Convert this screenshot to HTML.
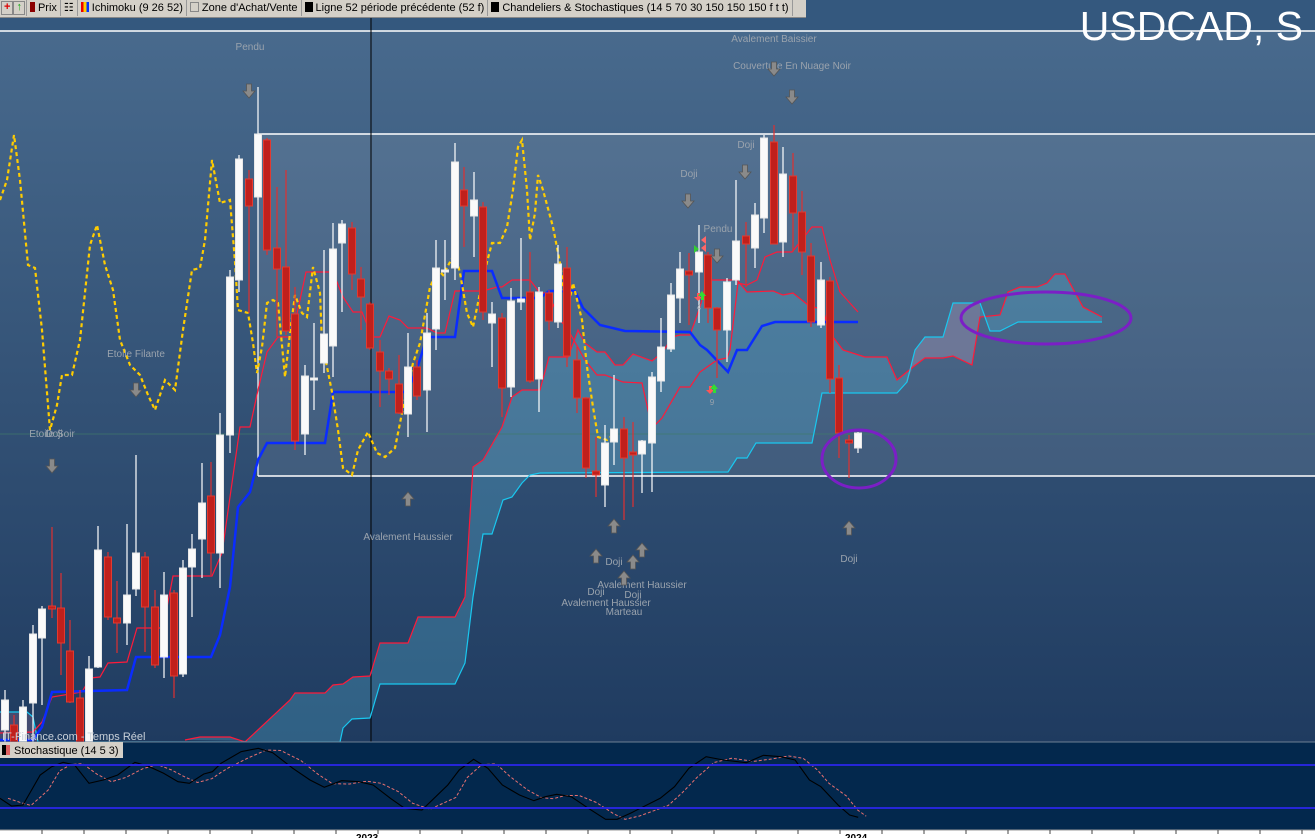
<!DOCTYPE html>
<html><head><meta charset="utf-8"><style>
html,body{margin:0;padding:0;width:1315px;height:838px;overflow:hidden;background:#fff;font-family:"Liberation Sans",sans-serif}
#tb{position:absolute;left:0;top:0;height:17px;width:806px;background:#d4d0c8;border-bottom:1px solid #888;font-size:11px;line-height:16px;color:#000;white-space:nowrap;overflow:hidden}
#tb span{display:inline-block;border-right:1px solid #999;padding:0 3px;height:16px;vertical-align:top}
.sq{display:inline-block;width:8px;height:10px;vertical-align:-1px;margin-right:3px}
</style></head><body>
<svg id="s" width="1315" height="838" style="position:absolute;left:0;top:0" xmlns="http://www.w3.org/2000/svg">
<defs>
<linearGradient id="bg" x1="0" y1="0" x2="0" y2="1">
<stop offset="0" stop-color="#4a6c8f"/><stop offset="1" stop-color="#1f3b60"/>
</linearGradient>
</defs>
<rect x="0" y="0" width="1315" height="742" fill="url(#bg)"/>
<rect x="0" y="0" width="1315" height="31" fill="#34587e"/>
<rect x="258" y="134" width="1057" height="342" fill="#ffffff" fill-opacity="0.09"/>
<g id="cloud"></g>
<line x1="0" y1="434" x2="1315" y2="434" stroke="#3f7a6a" stroke-width="1" opacity="0.7"/>
<line x1="0" y1="31" x2="1315" y2="31" stroke="#fff" stroke-width="1.5"/>
<line x1="258" y1="134" x2="1315" y2="134" stroke="#fff" stroke-width="1.5"/>
<line x1="258" y1="476" x2="1315" y2="476" stroke="#fff" stroke-width="1.5"/>
<line x1="258" y1="134" x2="258" y2="476" stroke="#fff" stroke-width="1.2"/>
<line x1="371" y1="18" x2="371" y2="742" stroke="#000" stroke-width="1"/>
<g id="lines"></g>
<g id="candles"></g>
<g id="marks" font-family="Liberation Sans, sans-serif" font-size="10" fill="#9aa3ad"></g>
<ellipse cx="1046" cy="318" rx="85" ry="26" fill="none" stroke="#7b1fc6" stroke-width="3"/>
<ellipse cx="859" cy="459" rx="37" ry="29" fill="none" stroke="#7b1fc6" stroke-width="3"/>
<text x="1303" y="40" text-anchor="end" font-size="41" fill="#fff" font-family="Liberation Sans, sans-serif">USDCAD, S</text>
<text x="2" y="740" font-size="11" fill="#c8d0d8" font-family="Liberation Sans, sans-serif">IT-Finance.com - Temps Réel</text>
<rect x="0" y="742" width="1315" height="88" fill="#03284d"/>
<line x1="0" y1="742" x2="1315" y2="742" stroke="#6c7f94" stroke-width="1"/>
<g id="stoch"></g>
<line x1="0" y1="765" x2="1315" y2="765" stroke="#2626d8" stroke-width="2"/>
<line x1="0" y1="808" x2="1315" y2="808" stroke="#2626d8" stroke-width="2"/>
<rect x="0" y="742" width="123" height="16" fill="#d4d0c8"/>
<rect x="2" y="745" width="4" height="10" fill="#000"/><rect x="6" y="745" width="4" height="10" fill="#e06060"/>
<text x="14" y="754" font-size="11" fill="#000" font-family="Liberation Sans, sans-serif">Stochastique (14 5 3)</text>
<rect x="0" y="830" width="1315" height="8" fill="#fff"/>
<line x1="0" y1="830" x2="1315" y2="830" stroke="#999"/>
<g id="axis"></g>
<text x="356" y="841" font-size="10" font-weight="bold" fill="#000">2023</text>
<text x="845" y="841" font-size="10" font-weight="bold" fill="#000">2024</text>
</svg>
<div id="tb">
<span style="padding:0 1px"><span style="border:1px solid #888;padding:0 2px;color:#d00;font-weight:bold;height:12px;line-height:11px;margin-top:1px">+</span><span style="border:1px solid #888;padding:0 2px;color:#1a1;font-weight:bold;height:12px;line-height:11px;margin-top:1px">↑</span></span><span><i class="sq" style="background:#8b0000;width:5px"></i>Prix</span><span>☷</span><span><i class="sq" style="background:linear-gradient(90deg,#e00 0 33%,#fc0 33% 66%,#03f 66%)"></i>Ichimoku (9 26 52)</span><span><i class="sq" style="border:1px solid #888;width:7px;height:8px"></i>Zone d'Achat/Vente</span><span><i class="sq" style="background:#000"></i>Ligne 52 période précédente (52 f)</span><span><i class="sq" style="background:#000"></i>Chandeliers &amp; Stochastiques (14 5 70 30 150 150 150 f t t)</span>
</div>
<script>
var NS="http://www.w3.org/2000/svg";
function el(p,t,a){var e=document.createElementNS(NS,t);for(var k in a)e.setAttribute(k,a[k]);document.getElementById(p).appendChild(e);return e}
function pts(a){return a.map(function(p){return p[0]+","+p[1]}).join(" ")}
var SSA=[[185,740],[200,737],[230,737],[245,742],[290,700],[295,693],[325,693],[333,685],[343,684],[353,677],[370,676],[380,643],[408,643],[418,617],[455,617],[465,597],[473,467],[483,460],[502,427],[512,397],[522,390],[540,390],[549,357],[568,357],[578,330],[585,343],[597,352],[605,352],[615,365],[623,365],[633,354],[652,361],[663,352],[672,337],[680,335],[690,335],[700,307],[707,280],[737,280],[747,292],[773,291],[783,295],[793,293],[808,305],[823,310],[830,333],[843,350],[865,357],[887,357],[897,380],[913,367],[925,358],[943,358],[953,356],[972,365],[980,317],[1000,315],[1008,292],[1020,287],[1037,287],[1047,283],[1055,274],[1065,274],[1083,307],[1102,317]];
var SSB=[[0,712],[27,712],[33,717],[38,742],[340,742],[343,728],[352,719],[370,718],[380,684],[455,684],[465,663],[473,597],[483,534],[492,534],[503,500],[512,497],[522,483],[530,475],[540,473],[728,472],[737,458],[747,458],[756,443],[812,443],[822,393],[897,393],[907,382],[915,350],[925,337],[943,337],[953,303],[980,303],[990,331],[1000,331],[1018,322],[1102,322]];
var poly=SSA.concat(SSB.filter(function(p){return p[0]>=185}).slice().reverse());
el("cloud","polygon",{points:pts(poly),fill:"#4fa6c8","fill-opacity":"0.35"});
el("cloud","polygon",{points:"0,712 27,712 33,717 38,742 0,742",fill:"#8a6a90","fill-opacity":"0.35"});
el("cloud","polygon",{points:"905,385 915,350 925,337 943,337 953,303 980,303 980,317 972,365 953,356 925,358 913,367",fill:"#b07090","fill-opacity":"0.35"});
var TEN=[[0,733],[33,732],[42,722],[52,697],[82,692],[90,678],[100,677],[108,663],[127,662],[137,628],[163,628],[173,576],[212,576],[222,553],[240,427],[250,427],[258,390],[267,352],[278,337],[292,337],[306,272],[333,272],[343,297],[353,312],[362,312],[372,337],[380,337],[389,316],[400,320],[408,328],[427,328],[437,333],[445,333],[455,291],[483,291],[497,287],[502,287],[512,280],[530,280],[540,293],[548,293],[560,320],[567,328],[585,360],[597,375],[605,375],[623,382],[642,383],[652,428],[662,418],[680,387],[690,387],[700,372],[717,360],[727,358],[730,350],[738,283],[747,285],[757,280],[765,257],[777,252],[792,252],[812,227],[822,227],[830,260],[840,292],[858,312]];
var KIJ=[[0,740],[33,740],[42,727],[52,692],[127,690],[136,657],[211,657],[220,635],[230,587],[238,507],[250,492],[258,460],[267,443],[325,443],[333,392],[407,392],[417,369],[427,337],[455,337],[464,271],[492,271],[502,298],[540,298],[549,291],[575,291],[583,308],[600,325],[625,331],[690,332],[700,345],[707,350],[728,372],[737,350],[747,350],[762,326],[775,322],[858,322]];
var CHI=[[0,200],[7,180],[14,135],[20,180],[28,265],[35,268],[42,330],[50,430],[57,405],[62,375],[72,375],[80,340],[90,245],[97,225],[105,265],[113,290],[120,340],[130,365],[140,375],[148,395],[155,410],[165,380],[175,390],[183,330],[192,270],[200,268],[205,240],[212,160],[220,203],[230,200],[235,262],[238,310],[248,313],[253,343],[257,373],[262,347],[267,303],[273,300],[278,303],[285,377],[290,333],[295,295],[302,313],[307,317],[313,267],[320,293],[322,343],[327,367],[332,392],[338,430],[343,468],[352,475],[358,450],[368,432],[377,453],[385,457],[395,448],[402,413],[413,363],[420,343],[430,287],[438,270],[443,275],[450,262],[455,253],[460,273],[467,313],[473,327],[480,293],[487,262],[492,243],[500,243],[507,227],[513,190],[518,147],[522,140],[527,190],[530,240],[535,213],[538,175],[543,190],[553,227],[560,263],[567,313],[573,283],[582,320],[587,367],[593,407],[598,437],[607,440],[613,435]];
el("lines","polyline",{points:pts(SSA),fill:"none",stroke:"#ff1a3a","stroke-width":1.2});
el("lines","polyline",{points:pts(SSB),fill:"none",stroke:"#19c8f0","stroke-width":1.2});
el("lines","polyline",{points:pts(TEN),fill:"none",stroke:"#ff1a3a","stroke-width":1.2});
el("lines","polyline",{points:pts(KIJ),fill:"none",stroke:"#0a2cff","stroke-width":2.5});
el("lines","polyline",{points:pts(CHI),fill:"none",stroke:"#ffcc00","stroke-width":2.2,"stroke-dasharray":"4 3"});
var C=[[5,700,730,690,742,0],[14,725,742,715,742,1],[23,707,742,700,742,0],[33,634,703,625,742,0],[42,609,638,606,705,0],[52,606,609,527,618,1],[61,608,643,573,675,1],[70,651,702,620,703,1],[80,698,742,690,742,1],[89,669,742,656,742,0],[98,550,667,526,668,0],[108,557,617,552,620,1],[117,618,623,581,653,1],[127,595,623,524,645,0],[136,553,589,455,596,0],[145,557,607,552,652,1],[155,607,665,590,668,1],[164,595,657,572,678,0],[174,593,676,590,698,1],[183,568,674,560,677,0],[192,549,567,534,617,0],[202,503,539,463,578,0],[211,496,553,462,575,1],[220,435,553,413,588,0],[230,277,435,270,453,0],[239,159,280,155,292,0],[249,179,206,170,313,1],[258,134,197,87,200,0],[267,140,250,138,255,1],[277,248,269,187,337,1],[286,267,331,170,335,1],[295,314,441,287,450,1],[305,376,434,365,455,0],[314,378,380,323,410,0],[324,334,363,250,373,0],[333,249,346,223,377,0],[342,224,243,220,312,0],[352,228,274,222,290,1],[361,279,297,267,330,1],[370,304,348,302,350,1],[380,352,371,340,407,1],[389,371,379,368,395,1],[399,384,413,355,414,1],[408,367,414,333,437,0],[417,367,396,360,400,1],[427,333,390,313,432,0],[436,268,329,240,350,0],[445,270,272,240,300,0],[455,162,268,143,280,0],[464,190,206,167,247,1],[474,200,216,172,257,0],[483,207,312,202,320,1],[492,314,323,302,367,0],[502,318,388,313,417,1],[511,301,387,288,397,0],[521,299,302,238,310,0],[530,292,381,252,383,1],[539,292,379,287,412,0],[549,293,321,290,330,1],[558,264,322,245,328,0],[567,268,356,247,367,1],[577,360,398,347,413,1],[586,398,468,397,478,1],[596,471,475,437,497,1],[605,443,485,425,507,0],[614,429,442,375,465,0],[624,429,458,417,520,1],[633,452,455,422,507,1],[642,441,454,440,493,0],[652,377,443,372,492,0],[661,347,381,318,392,0],[671,295,349,283,352,0],[680,269,298,252,323,0],[689,271,275,253,325,1],[699,252,272,225,323,0],[708,255,308,252,323,1],[717,308,330,307,378,1],[727,282,330,278,362,0],[736,241,280,180,285,0],[746,236,244,222,287,1],[755,215,248,203,268,0],[764,138,218,135,233,0],[774,142,244,125,244,1],[783,174,242,147,257,0],[793,176,213,153,252,1],[802,212,252,191,275,1],[811,256,322,243,327,1],[821,280,325,262,328,0],[830,281,379,277,393,1],[839,378,433,365,458,1],[849,440,443,435,478,1],[858,433,448,432,453,0]];
C.forEach(function(c){
 var col=c[5]?"#e03030":"#ffffff";
 el("candles","line",{x1:c[0],y1:c[3],x2:c[0],y2:c[4],stroke:col,"stroke-width":1.2});
 var h=Math.max(2,c[2]-c[1]);
 el("candles","rect",{x:c[0]-3.5,y:c[1],width:7,height:h,fill:c[5]?"#c0201c":"#fafafa",stroke:c[5]?"#e23a30":"#e8e8e8","stroke-width":1});
});
var L=[["Pendu",250,50],["Avalement Baissier",774,42],["Couverture En Nuage Noir",792,69],["Doji",689,177],["Doji",746,148],["Pendu",718,232],["Etoile Filante",136,357],["Etoile Soir",52,437],["Doji",54,437],["Avalement Haussier",408,540],["Doji",614,565],["Avalement Haussier",642,588],["Doji",596,595],["Doji",633,598],["Avalement Haussier",606,606],["Marteau",624,615],["Doji",849,562]];
L.forEach(function(l){var t=el("marks","text",{x:l[1],y:l[2],"text-anchor":"middle"});t.textContent=l[0]});
function arrow(x,y,down){
 var p=down?[[x-2.5,y-8],[x+2.5,y-8],[x+2.5,y-1],[x+6,y-1],[x,y+6],[x-6,y-1],[x-2.5,y-1]]:[[x-2.5,y+8],[x+2.5,y+8],[x+2.5,y+1],[x+6,y+1],[x,y-6],[x-6,y+1],[x-2.5,y+1]];
 el("marks","polygon",{points:pts(p),fill:"#8a8a8a",stroke:"#555","stroke-width":0.8});
}
[[249,92],[774,70],[792,98],[688,202],[745,173],[717,257],[136,391],[52,467]].forEach(function(a){arrow(a[0],a[1],1)});
[[408,498],[849,527],[596,555],[642,549],[633,561],[624,577],[614,525]].forEach(function(a){arrow(a[0],a[1],0)});
el("marks","polygon",{points:"694,245 699,249 694,253",fill:"#3c3"});
el("marks","polygon",{points:"706,236 701,240 706,244",fill:"#f66"});
el("marks","polygon",{points:"706,244 701,248 706,252",fill:"#f66"});
el("marks","text",{x:712,y:405,"font-size":8,"text-anchor":"middle"}).textContent="9";
el("marks","text",{x:699,y:310,"font-size":8,"text-anchor":"middle"}).textContent="4";
el("marks","polygon",{points:"709,386 712,386 712,390 714,390 710,394 706,390 709,390",fill:"#f55"});
el("marks","polygon",{points:"713,393 716,393 716,389 718,389 714,384 710,389 713,389",fill:"#3d3"});
el("marks","polygon",{points:"697,293 700,293 700,297 702,297 698,301 694,297 697,297",fill:"#f55"});
el("marks","polygon",{points:"701,300 704,300 704,296 706,296 702,291 698,296 701,296",fill:"#3d3"});
var S=[[0,205],[20,228],[40,225],[70,135],[90,110],[110,97],[130,105],[155,160],[180,150],[205,135],[235,97],[260,110],[285,130],[310,155],[330,160],[355,132],[370,125],[385,100],[420,65],[450,55],[475,68],[510,115],[540,150],[565,172],[595,152],[625,155],[650,165],[680,205],[705,235],[735,240],[780,165],[800,120],[825,88],[850,115],[875,165],[905,195],[930,212],[950,200],[970,193],[995,200],[1025,235],[1055,268],[1075,268],[1100,248],[1150,205],[1175,170],[1200,115],[1230,80],[1260,90],[1300,98],[1330,76],[1360,80],[1385,90],[1410,150],[1430,170],[1460,225],[1480,255],[1495,262]];
var sp=S.map(function(p){return [ (p[0]/1.742).toFixed(1), (730+p[1]/3).toFixed(1)]});
var dp=S.map(function(p,i){var q=S[Math.max(0,i-1)];return [((p[0]+14)/1.742).toFixed(1),(730+(p[1]+q[1])/6).toFixed(1)]});
el("stoch","polyline",{points:pts(dp),fill:"none",stroke:"#e87070","stroke-width":1,"stroke-dasharray":"3 2"});
el("stoch","polyline",{points:pts(sp),fill:"none",stroke:"#000","stroke-width":1.1});
for(var x=42;x<1315;x+=42){el("axis","line",{x1:x,y1:830,x2:x,y2:834,stroke:"#444"});}
</script>
</body></html>
